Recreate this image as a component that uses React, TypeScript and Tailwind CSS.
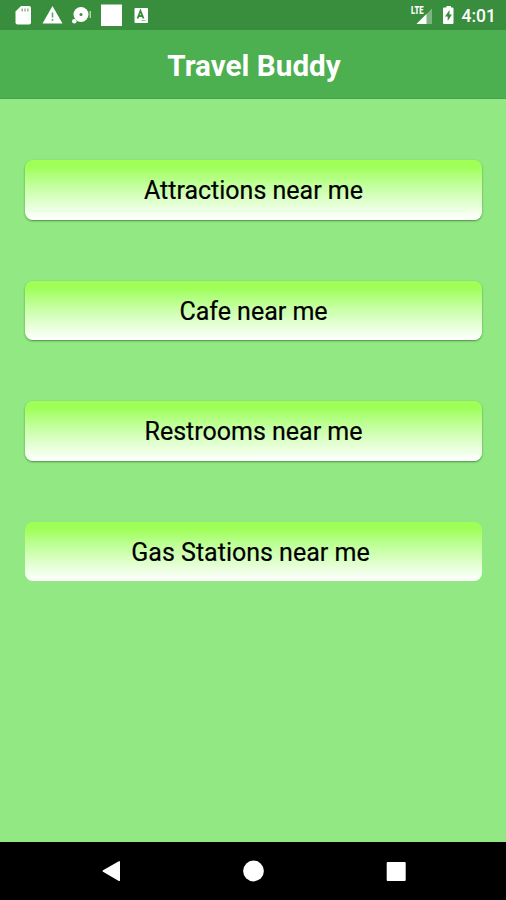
const places = [
  { label: "Attractions near me", style: "shadow-[0_1px_2px_rgba(0,60,0,0.5)]" },
  { label: "Cafe near me", style: "shadow-[0_1px_2px_rgba(0,60,0,0.5)]" },
  { label: "Restrooms near me", style: "shadow-[0_1px_2px_rgba(0,60,0,0.5)]" },
  { label: "Gas Stations near me", style: "pr-[6px]" },
];

function StatusBar() {
  return (
    <div className="flex h-[30px] items-center bg-[#388e3c] text-white">
      <svg width="160" height="30" viewBox="0 0 160 30" fill="#fff" aria-hidden="true">
        {/* SD card */}
        <path d="M21 6h8a2 2 0 0 1 2 2v14.5a2 2 0 0 1-2 2H17.5a2 2 0 0 1-2-2V11.5z" />
        <path d="M21.5 8.500h1.500v3h-1.500zM24.300 8.500h1.500v3h-1.500zM27.100 8.500h1.500v3h-1.500z" fill="#388e3c" opacity=".6" />
        {/* Warning */}
        <path d="M52.5 6 62.5 23.5h-20z" />
        <path d="M51.700 12.500h1.600v5h-1.600zM51.700 19h1.600v1.700h-1.600z" fill="#388e3c" opacity=".8" />
        {/* Disc */}
        <circle cx="81" cy="14.5" r="7.5" />
        <circle cx="81" cy="14.5" r="1.5" fill="#388e3c" />
        <path d="M74 18.500 76.500 21" stroke="#388e3c" />
        <circle cx="74.300" cy="21.300" r="2.300" />
        <path d="M89.500 11h1.500v7h-1.500z" opacity=".6" />
        <path d="M101 4.500h21v21.500h-21z" />
        {/* Keyboard badge */}
        <rect x="134.5" y="8" width="13.5" height="15" rx="1" />
        <path d="m137.500 18.500 3-7.500 3 7.500M138.500 16h4" fill="none" stroke="#388e3c" strokeWidth="1.8" />
        <path d="M141.500 20.500h4" stroke="#388e3c" opacity=".6" />
      </svg>
      <div className="ml-auto flex items-center pr-[10px]">
        <svg width="54" height="30" viewBox="0 0 54 30" fill="#fff" aria-hidden="true">
          <path d="M25 8.500v15.500H9.500z" opacity=".35" />
          <path d="M19.500 14v10h-10z" />
          <text x="4" y="14" className="font-['Roboto',sans-serif] text-[10.5px] font-black" textLength="12.5" lengthAdjust="spacingAndGlyphs">LTE</text>
          <path d="M39.500 7.500V6h4.500v1.500h1.500a1 1 0 0 1 1 1V23a1 1 0 0 1-1 1H37a1 1 0 0 1-1-1V8.500a1 1 0 0 1 1-1z" />
          <path d="m42.500 10-4.500 6.500h2.700V21l4.300-6.500h-2.500z" fill="#388e3c" />
        </svg>
        <span className="ml-[1px] pt-[1px] text-[17.5px] leading-[30px] font-medium">4:01</span>
      </div>
    </div>
  );
}

function NavBar() {
  return (
    <nav className="h-[58px] bg-black">
      <svg width="506" height="58" viewBox="0 0 506 58" fill="#fff" aria-label="Navigation">
        <path d="M118.800 19.200 103 28.300a.8.800 0 0 0 0 1.400l15.800 9.200a.8.800 0 0 0 1.200-.7V19.900a.8.800 0 0 0-1.200-.7z" />
        <circle cx="253.5" cy="29" r="10.4" />
        <rect x="386.7" y="20" width="19" height="19" rx="1" />
      </svg>
    </nav>
  );
}

export default function App() {
  return (
    <div className="flex h-[900px] w-[506px] flex-col overflow-hidden bg-[#92e882] font-['Roboto',sans-serif]">
      <StatusBar />
      <header className="flex h-[69px] items-center justify-center border-b border-[#48a34b] bg-[#4caf50]">
        <h1 className="pt-[3px] pl-[2px] text-[29.7px] leading-none font-bold text-white">Travel Buddy</h1>
      </header>

      <main className="flex flex-1 flex-col gap-[61px] pt-[61px] pr-[24px] pl-[25px]">
        {places.map((place) => (
          <button
            key={place.label}
            className={`flex h-[59.5px] shrink-0 items-center justify-center rounded-[8px] bg-linear-to-b from-[#9fff57] from-12% to-white pt-[2px] text-[25px] leading-none text-black [-webkit-text-stroke:0.2px_black] ${place.style}`}
          >
            {place.label}
          </button>
        ))}
      </main>

      <NavBar />
    </div>
  );
}
